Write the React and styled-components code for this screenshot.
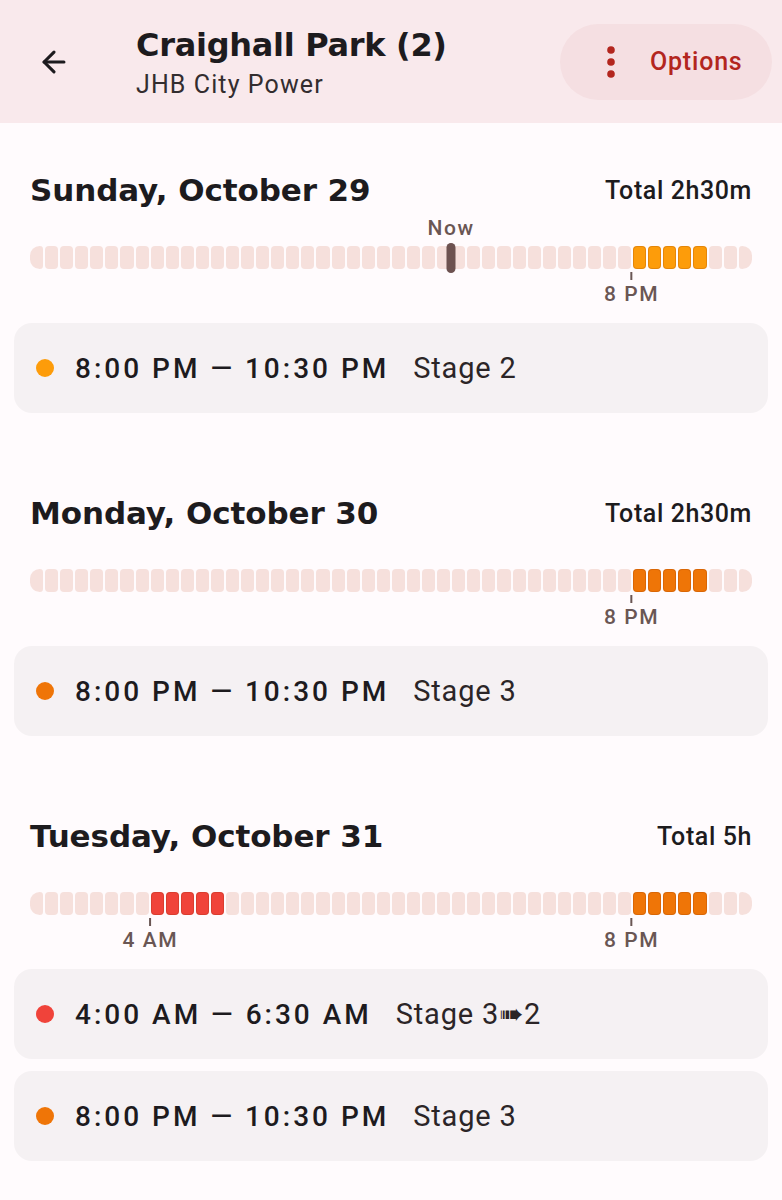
import styled, { createGlobalStyle } from 'styled-components'
import { ArrowLeft } from 'lucide-react'

const SLOTS = 48

const COLORS = {
  empty: '#f6e0dc',
  stage2: '#fd9c0a',
  stage3: '#ef7507',
  stage4: '#f0433a',
}

const days = [
  {
    title: 'Sunday, October 29',
    total: 'Total 2h30m',
    now: 28,
    blocks: [{ from: 40, to: 45, color: COLORS.stage2, label: '8 PM' }],
    events: [{ time: '8:00 PM — 10:30 PM', stage: 'Stage 2', color: COLORS.stage2 }],
  },
  {
    title: 'Monday, October 30',
    total: 'Total 2h30m',
    blocks: [{ from: 40, to: 45, color: COLORS.stage3, label: '8 PM' }],
    events: [{ time: '8:00 PM — 10:30 PM', stage: 'Stage 3', color: COLORS.stage3 }],
  },
  {
    title: 'Tuesday, October 31',
    total: 'Total 5h',
    blocks: [
      { from: 8, to: 13, color: COLORS.stage4, label: '4 AM' },
      { from: 40, to: 45, color: COLORS.stage3, label: '8 PM' },
    ],
    events: [
      { time: '4:00 AM — 6:30 AM', stage: 'Stage 3\u27A02', color: COLORS.stage4 },
      { time: '8:00 PM — 10:30 PM', stage: 'Stage 3', color: COLORS.stage3 },
    ],
  },
]

const slotColor = (day, i) => {
  const b = day.blocks.find((b) => i >= b.from && i < b.to)
  return b ? b.color : null
}

// three dots, a little larger than the lucide one
const DotsIcon = () => (
  <svg width="10" height="34" viewBox="0 0 10 34" fill="currentColor">
    <circle cx="5" cy="5" r="3.8" />
    <circle cx="5" cy="17" r="3.8" />
    <circle cx="5" cy="29" r="3.8" />
  </svg>
)

const Day = ({ day }) => (
  <Section>
    <DayHeader>
      <DayTitle>{day.title}</DayTitle>
      <Total>{day.total}</Total>
    </DayHeader>
    <Timeline>
      {day.now !== undefined && (
        <>
          <NowLabel style={{ left: `${(day.now / SLOTS) * 100}%` }}>Now</NowLabel>
          <NowMarker style={{ left: `${(day.now / SLOTS) * 100}%` }} />
        </>
      )}
      <Bar>
        {Array.from({ length: SLOTS }).map((_, i) => {
          const c = slotColor(day, i)
          return <Slot key={i} $color={c || COLORS.empty} $on={!!c} />
        })}
      </Bar>
      {day.blocks.map((b) => (
        <Mark key={b.label} style={{ left: `${(b.from / SLOTS) * 100}%` }}>
          <Tick />
          <TickLabel>{b.label}</TickLabel>
        </Mark>
      ))}
    </Timeline>
    <Events>
      {day.events.map((e) => (
        <Card key={e.time}>
          <Dot $color={e.color} />
          <Time>{e.time}</Time>
          <Stage>{e.stage}</Stage>
        </Card>
      ))}
    </Events>
  </Section>
)

const App = () => {
  return (
    <>
      <Global />
      <TopBar>
        <BackButton>
          <ArrowLeft size={34} strokeWidth={2.2} />
        </BackButton>
        <Titles>
          <h1>Craighall Park (2)</h1>
          <span>JHB City Power</span>
        </Titles>
        <OptionsButton>
          <DotsIcon />
          Options
        </OptionsButton>
      </TopBar>
      <Content>
        {days.map((d) => (
          <Day key={d.title} day={d} />
        ))}
      </Content>
    </>
  )
}

export default App

const Global = createGlobalStyle`
  body {
    margin: 0;
    background: #fffbfd;
    font-family: Roboto, "Liberation Sans", sans-serif;
    color: #1d1b1e;
  }
`

const TopBar = styled.header`
  height: 123px;
  background: #f9e9ec;
  display: flex;
  align-items: center;
  padding: 0 10px 0 20px;
  box-sizing: border-box;
`

const BackButton = styled.div`
  width: 68px;
  display: flex;
  align-items: center;
  justify-content: center;
  color: #1d1b1e;
  margin-right: 48px;
`

const Titles = styled.div`
  flex: 1;
  display: flex;
  flex-direction: column;
  margin-top: 5px;
  h1 {
    margin: 0;
    font-family: "DejaVu Sans", sans-serif;
    font-weight: 700;
    font-size: 32px;
    line-height: 42px;
    letter-spacing: -0.3px;
    color: #1d1b1e;
  }
  span {
    font-size: 25px;
    line-height: 38px;
    color: #332d2f;
    letter-spacing: 1.1px;
  }
`

const OptionsButton = styled.div`
  height: 76px;
  width: 212px;
  border-radius: 38px;
  background: #f5dfe2;
  display: flex;
  align-items: center;
  gap: 34px;
  padding-left: 46px;
  box-sizing: border-box;
  color: #b3261e;
  font-size: 25px;
  font-weight: 500;
  letter-spacing: 0.8px;
`

const Content = styled.main`
  padding: 47px 14px 20px;
`

const Section = styled.section`
  margin-bottom: 80px;
  &:last-child {
    margin-bottom: 0;
  }
`

const DayHeader = styled.div`
  height: 40px;
  display: flex;
  align-items: center;
  justify-content: space-between;
  padding: 0 16px;
`

const DayTitle = styled.h2`
  margin: 0;
  font-family: "DejaVu Sans", sans-serif;
  font-weight: 700;
  font-size: 31px;
  letter-spacing: -0.1px;
  color: #1d1b1e;
`

const Total = styled.span`
  font-size: 25px;
  font-weight: 500;
  letter-spacing: 0.6px;
  color: #1d1b1e;
`

const Timeline = styled.div`
  position: relative;
  height: 113px;
  margin: 0 16px;
`

const Bar = styled.div`
  position: absolute;
  top: 36px;
  left: 0;
  right: 0;
  height: 23px;
  display: flex;
  gap: 2px;
`

const Slot = styled.div`
  flex: 1;
  border-radius: 4px;
  background: ${(p) => p.$color};
  box-shadow: ${(p) => (p.$on ? 'inset 0 0 0 1px rgba(120, 40, 0, 0.18)' : 'none')};
  &:first-child {
    border-radius: 12px 4px 4px 12px;
  }
  &:last-child {
    border-radius: 4px 12px 12px 4px;
  }
`

const NowLabel = styled.div`
  position: absolute;
  top: 6px;
  transform: translateX(-50%);
  font-size: 21px;
  line-height: 24px;
  font-weight: 500;
  letter-spacing: 1.6px;
  color: #6a5654;
`

const NowMarker = styled.div`
  position: absolute;
  top: 33px;
  width: 9px;
  height: 30px;
  border-radius: 5px;
  background: #6d5250;
  transform: translateX(-50%);
  z-index: 1;
`

const Mark = styled.div`
  position: absolute;
  top: 62px;
  display: flex;
  flex-direction: column;
  align-items: center;
  transform: translateX(-50%);
`

const Tick = styled.div`
  width: 2px;
  height: 8px;
  background: #6a5654;
`

const TickLabel = styled.div`
  margin-top: 2px;
  font-size: 21px;
  line-height: 24px;
  font-weight: 500;
  letter-spacing: 1.6px;
  color: #6a5654;
  white-space: nowrap;
`

const Events = styled.div`
  display: flex;
  flex-direction: column;
  gap: 12px;
`

const Card = styled.div`
  height: 90px;
  border-radius: 18px;
  background: #f5f1f3;
  display: flex;
  align-items: center;
  padding-left: 22px;
`

const Dot = styled.span`
  width: 18px;
  height: 18px;
  border-radius: 50%;
  background: ${(p) => p.$color};
  margin-right: 21px;
`

const Time = styled.span`
  font-size: 28px;
  font-weight: 500;
  letter-spacing: 3px;
  color: #1d1b1e;
  margin-right: 24px;
`

const Stage = styled.span`
  font-family: Roboto, "DejaVu Sans", sans-serif;
  font-size: 29px;
  letter-spacing: 0.8px;
  color: #2b2527;
`
